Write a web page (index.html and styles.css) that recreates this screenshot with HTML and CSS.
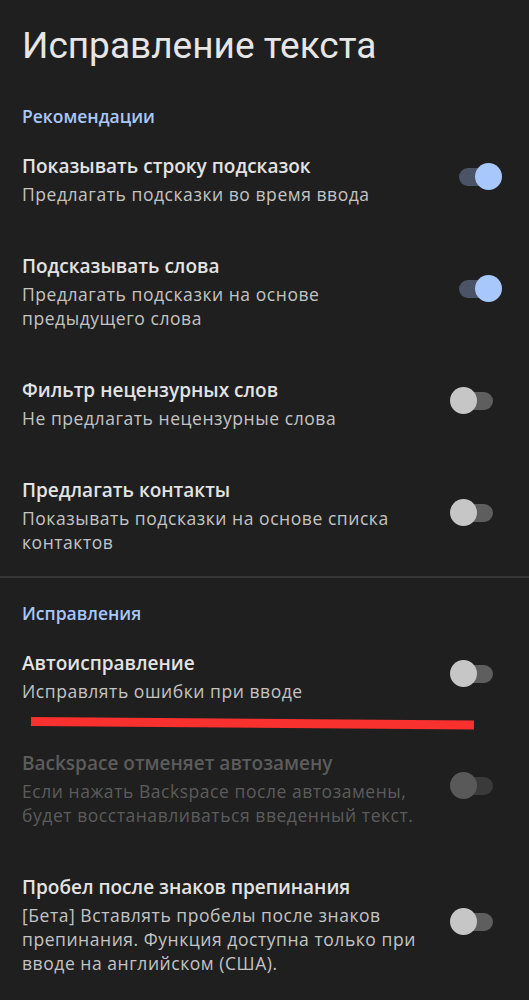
FILE: index.html
```html
<!DOCTYPE html>
<html lang="ru">
<head>
<meta charset="utf-8">
<title>Исправление текста</title>
<link rel="stylesheet" href="styles.css">
</head>
<body>
<main class="page">
  <h1 class="page-title">Исправление текста</h1>

  <section class="group">
    <h2 class="group-title">Рекомендации</h2>
    <div class="item">
      <div class="item-text">
        <div class="item-title">Показывать строку подсказок</div>
        <div class="item-sub">Предлагать подсказки во время ввода</div>
      </div>
      <span class="switch on"><span class="track"></span><span class="thumb"></span></span>
    </div>
    <div class="item">
      <div class="item-text">
        <div class="item-title">Подсказывать слова</div>
        <div class="item-sub">Предлагать подсказки на основе предыдущего слова</div>
      </div>
      <span class="switch on"><span class="track"></span><span class="thumb"></span></span>
    </div>
    <div class="item">
      <div class="item-text">
        <div class="item-title">Фильтр нецензурных слов</div>
        <div class="item-sub">Не предлагать нецензурные слова</div>
      </div>
      <span class="switch"><span class="track"></span><span class="thumb"></span></span>
    </div>
    <div class="item">
      <div class="item-text">
        <div class="item-title">Предлагать контакты</div>
        <div class="item-sub">Показывать подсказки на основе списка контактов</div>
      </div>
      <span class="switch"><span class="track"></span><span class="thumb"></span></span>
    </div>
  </section>

  <hr class="divider">

  <section class="group">
    <h2 class="group-title">Исправления</h2>
    <div class="item marked">
      <div class="item-text">
        <div class="item-title">Автоисправление</div>
        <div class="item-sub">Исправлять ошибки при вводе</div>
      </div>
      <span class="switch"><span class="track"></span><span class="thumb"></span></span>
      <span class="red-mark"></span>
    </div>
    <div class="item disabled">
      <div class="item-text">
        <div class="item-title">Backspace отменяет автозамену</div>
        <div class="item-sub">Если нажать Backspace после автозамены, будет восстанавливаться введенный текст.</div>
      </div>
      <span class="switch"><span class="track"></span><span class="thumb"></span></span>
    </div>
    <div class="item">
      <div class="item-text">
        <div class="item-title">Пробел после знаков препинания</div>
        <div class="item-sub">[Бета] Вставлять пробелы после знаков препинания. Функция доступна только при вводе на английском (США).</div>
      </div>
      <span class="switch"><span class="track"></span><span class="thumb"></span></span>
    </div>
  </section>
</main>
</body>
</html>
```

FILE: styles.css
```css
html, body {
  margin: 0;
  padding: 0;
  background: #1f1f1f;
}

body {
  font-family: "Open Sans", "Noto Sans", "DejaVu Sans", sans-serif;
  color: #e3e3e3;
  height: 1000px;
  overflow: hidden;
}

.page {
  padding: 24px 0 0 0;
}

.page-title {
  margin: 0 0 36px 0;
  padding: 0 27px 0 22px;
  font-family: Roboto, "Noto Sans", sans-serif;
  font-size: 37px;
  font-weight: 400;
  line-height: 44px;
  color: #e6e6e6;
}

.group {
  padding: 0 27px 0 22px;
}

.group-title {
  margin: 0;
  font-size: 17.5px;
  font-weight: 600;
  line-height: 24px;
  color: #a8c7fa;
}

.item {
  position: relative;
  display: flex;
  align-items: center;
  gap: 28px;
  padding: 23px 0 22px 0;
}

.item-text {
  flex: 1;
  min-width: 0;
}

.item-title {
  font-size: 19px;
  font-weight: 600;
  line-height: 30px;
  color: #e3e3e3;
}

.item-sub {
  margin-top: 1px;
  font-size: 17.5px;
  font-weight: 400;
  line-height: 24px;
  letter-spacing: 0.55px;
  color: #c4c4c4;
}

.item.disabled .item-title,
.item.disabled .item-sub {
  color: #5c5c5c;
}

.switch {
  position: relative;
  flex: none;
  width: 52px;
  height: 27px;
  margin-top: -4px;
}

.track {
  position: absolute;
  left: 9px;
  top: 5px;
  width: 34px;
  height: 18px;
  border-radius: 9px;
  background: #5e5e5e;
}

.thumb {
  position: absolute;
  left: 0;
  top: 0;
  width: 27px;
  height: 27px;
  border-radius: 50%;
  background: #c6c6c6;
}

.switch.on .track {
  background: #4b5466;
}

.switch.on .thumb {
  left: 25px;
  background: #a8c7fa;
}

.item.disabled .track {
  background: #3a3a3a;
}

.item.disabled .thumb {
  background: #595959;
}

.divider {
  margin: 0 0 23px 0;
  border: 0;
  height: 2px;
  background: #363636;
}

.red-mark {
  position: absolute;
  left: 9px;
  top: 92px;
  width: 443px;
  height: 9px;
  background: #f8302e;
  transform: rotate(0.45deg);
  transform-origin: left center;
}
```
